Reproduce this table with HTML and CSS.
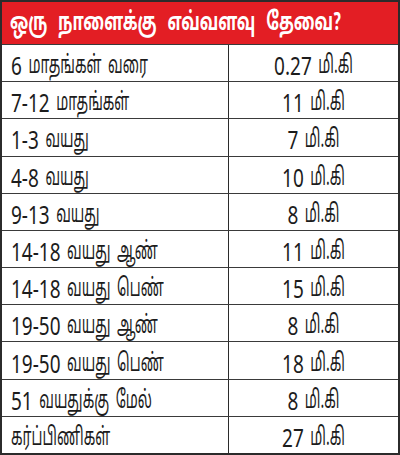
FILE: index.html
```html
<!DOCTYPE html>
<html lang="ta">
<head>
<meta charset="utf-8">
<title>ஒரு நாளைக்கு எவ்வளவு தேவை?</title>
<link rel="stylesheet" href="styles.css">
</head>
<body>
<div class="chart">
  <div class="head"><span class="ht">ஒரு நாளைக்கு எவ்வளவு தேவை?</span></div>
  <div class="row"><div class="who"><span class="t"><span class="n">6</span> <span class="w">மாதங்கள் வரை</span></span></div><div class="amt"><span class="t"><span class="n">0.27</span> <span class="w">மி.கி</span></span></div></div>
  <div class="row"><div class="who"><span class="t"><span class="n">7-12</span> <span class="w">மாதங்கள்</span></span></div><div class="amt"><span class="t"><span class="n">11</span> <span class="w">மி.கி</span></span></div></div>
  <div class="row"><div class="who"><span class="t"><span class="n">1-3</span> <span class="w">வயது</span></span></div><div class="amt"><span class="t"><span class="n">7</span> <span class="w">மி.கி</span></span></div></div>
  <div class="row"><div class="who"><span class="t"><span class="n">4-8</span> <span class="w">வயது</span></span></div><div class="amt"><span class="t"><span class="n">10</span> <span class="w">மி.கி</span></span></div></div>
  <div class="row"><div class="who"><span class="t"><span class="n">9-13</span> <span class="w">வயது</span></span></div><div class="amt"><span class="t"><span class="n">8</span> <span class="w">மி.கி</span></span></div></div>
  <div class="row"><div class="who"><span class="t"><span class="n">14-18</span> <span class="w">வயது ஆண்</span></span></div><div class="amt"><span class="t"><span class="n">11</span> <span class="w">மி.கி</span></span></div></div>
  <div class="row"><div class="who"><span class="t"><span class="n">14-18</span> <span class="w">வயது பெண்</span></span></div><div class="amt"><span class="t"><span class="n">15</span> <span class="w">மி.கி</span></span></div></div>
  <div class="row"><div class="who"><span class="t"><span class="n">19-50</span> <span class="w">வயது ஆண்</span></span></div><div class="amt"><span class="t"><span class="n">8</span> <span class="w">மி.கி</span></span></div></div>
  <div class="row"><div class="who"><span class="t"><span class="n">19-50</span> <span class="w">வயது பெண்</span></span></div><div class="amt"><span class="t"><span class="n">18</span> <span class="w">மி.கி</span></span></div></div>
  <div class="row"><div class="who"><span class="t"><span class="n">51</span> <span class="w">வயதுக்கு மேல்</span></span></div><div class="amt"><span class="t"><span class="n">8</span> <span class="w">மி.கி</span></span></div></div>
  <div class="row"><div class="who"><span class="t"><span class="w">கர்ப்பிணிகள்</span></span></div><div class="amt"><span class="t"><span class="n">27</span> <span class="w">மி.கி</span></span></div></div>
</div>
</body>
</html>
```
FILE: styles.css
```css
html, body {
  margin: 0;
  padding: 0;
  background: #ffffff;
}
.chart {
  width: 400px;
  height: 455px;
  box-sizing: border-box;
  border: 2px solid #2b2b2b;
  display: grid;
  grid-template-rows: 42px repeat(11, 1fr);
  color: #1c1c1c;
  overflow: hidden;
}
.head {
  background: #e31e24;
  color: #ffffff;
  display: flex;
  align-items: center;
  padding-left: 8px;
  padding-top: 8px;
  box-sizing: border-box;
  min-width: 0;
}
.ht {
  display: inline-block;
  white-space: nowrap;
  font-family: "Noto Sans Tamil", "Noto Sans", sans-serif;
  font-weight: bold;
  font-size: 16.25px;
  line-height: 1;
  word-spacing: 6.5px;
  transform: scaleY(1.54);
  transform-origin: 50% 88.8%;
}
.row {
  display: grid;
  grid-template-columns: 226px 1fr;
  border-top: 1px solid #3a3a3a;
  min-height: 0;
}
.row:first-of-type {
  border-top-color: #6a1a1a;
}
.who {
  display: flex;
  align-items: center;
  padding-left: 9px;
  padding-top: 6px;
  box-sizing: border-box;
  min-width: 0;
}
.amt {
  display: flex;
  align-items: center;
  justify-content: center;
  padding-top: 6px;
  box-sizing: border-box;
  border-left: 1px solid #2b2b2b;
  min-width: 0;
}
.t {
  white-space: nowrap;
  font-family: "Noto Sans", sans-serif;
  font-size: 25px;
  line-height: 25px;
}
.n {
  display: inline-block;
  font-family: "Noto Sans", sans-serif;
  font-size: 19px;
  line-height: 1;
  transform: scaleY(1.316);
  transform-origin: 50% 88.8%;
}
.w {
  display: inline-block;
  font-family: "Noto Sans Tamil", "Noto Sans", sans-serif;
  font-size: 14px;
  line-height: 1;
  word-spacing: 3px;
  transform: scaleY(1.786);
  transform-origin: 50% 88.8%;
}
```
